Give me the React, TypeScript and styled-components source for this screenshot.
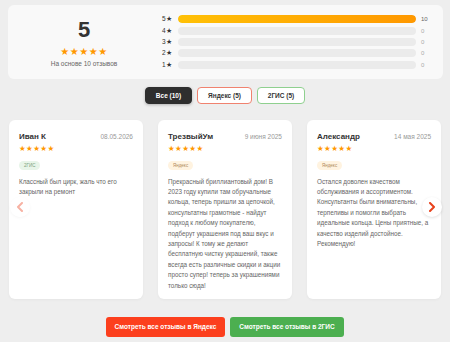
import React from "react";
import styled, { createGlobalStyle } from "styled-components";

const GlobalStyle = createGlobalStyle`
  html, body {
    margin: 0;
    padding: 0;
    background: #eeeeee;
    font-family: "Liberation Sans", Arial, sans-serif;
  }
`;

interface Review {
  name: string;
  date: string;
  source: "yandex" | "2gis";
  text: string;
}

const reviews: Review[] = [
  {
    name: "Иван К",
    date: "08.05.2026",
    source: "2gis",
    text: "Классный был цирк, жаль что его закрыли на ремонт",
  },
  {
    name: "ТрезвыйУм",
    date: "9 июня 2025",
    source: "yandex",
    text:
      "Прекрасный бриллиантовый дом! В 2023 году купили там обручальные кольца, теперь пришли за цепочкой, консультатны грамотные - найдут подход к любому покупателю, подберут украшения под ваш вкус и запросы! К тому же делают бесплатную чистку украшений, также всегда есть различные скидки и акции просто супер! теперь за украшениями только сюда!",
  },
  {
    name: "Александр",
    date: "14 мая 2025",
    source: "yandex",
    text:
      "Остался доволен качеством обслуживания и ассортиментом. Консультанты были внимательны, терпеливы и помогли выбрать идеальные кольца. Цены приятные, а качество изделий достойное. Рекомендую!",
  },
];

const bars = [
  { label: 5, count: 10 },
  { label: 4, count: 0 },
  { label: 3, count: 0 },
  { label: 2, count: 0 },
  { label: 1, count: 0 },
];

const Page = styled.div`
  width: 450px;
  padding: 5px 0 0;
  box-sizing: border-box;
`;

const Summary = styled.div`
  margin: 0 7px 0 8px;
  height: 74px;
  background: #f9f9f9;
  border-radius: 6px;
  display: flex;
  align-items: center;
`;

const Overall = styled.div`
  width: 152px;
  display: flex;
  flex-direction: column;
  align-items: center;
`;

const Score = styled.div`
  font-size: 22px;
  font-weight: bold;
  color: #333;
  line-height: 22px;
  margin-top: 2px;
`;

const Stars = styled.div<{ $size: number }>`
  color: #ff9800;
  font-family: "DejaVu Sans", sans-serif;
  font-size: ${(p) => p.$size}px;
  line-height: 1;
  letter-spacing: ${(p) => p.$size * 0.05}px;
`;

const BigStars = styled(Stars)`
  margin-top: 6px;
`;

const BasedOn = styled.div`
  font-size: 6.5px;
  color: #666;
  margin-top: 3px;
`;

const Bars = styled.div`
  flex: 1;
  padding-right: 8px;
  display: flex;
  flex-direction: column;
  gap: 3.3px;
`;

const BarRow = styled.div`
  display: flex;
  align-items: center;
  height: 8px;
`;

const BarLabel = styled.span`
  width: 16px;
  font-size: 6.5px;
  color: #333;
  padding-left: 2px;
`;

const Track = styled.div`
  flex: 1;
  height: 8px;
  border-radius: 4px;
  background: #ebebeb;
  overflow: hidden;
`;

const Fill = styled.div`
  height: 100%;
  border-radius: 4px;
  background: linear-gradient(90deg, #ffc107, #ff9800);
`;

const BarCount = styled.span<{ $active: boolean }>`
  width: 14px;
  padding-left: 5px;
  font-size: 6px;
  color: ${(p) => (p.$active ? "#666" : "#aaa")};
`;

const Filters = styled.div`
  display: flex;
  justify-content: center;
  gap: 5px;
  margin-top: 8px;
`;

const FilterButton = styled.button<{ $variant: "all" | "yandex" | "2gis" }>`
  height: 17px;
  padding: 0;
  width: ${(p) => (p.$variant === "all" ? 47 : p.$variant === "yandex" ? 55 : 48)}px;
  border-radius: 4px;
  font-family: inherit;
  font-size: 6.5px;
  font-weight: bold;
  cursor: pointer;
  background: ${(p) => (p.$variant === "all" ? "#2e2e2e" : "#fff")};
  color: ${(p) => (p.$variant === "all" ? "#fff" : "#333")};
  border: 1px solid
    ${(p) =>
      p.$variant === "all" ? "#2e2e2e" : p.$variant === "yandex" ? "#f0826f" : "#8fd08f"};
  box-shadow: ${(p) => (p.$variant === "all" ? "0 1px 3px rgba(0,0,0,0.25)" : "none")};
`;

const Carousel = styled.div`
  position: relative;
  margin-top: 16px;
  padding: 0 9px;
  display: grid;
  grid-template-columns: repeat(3, 1fr);
  gap: 15px;
`;

const Card = styled.div`
  background: #fff;
  border-radius: 6px;
  padding: 10px 10px 8px;
  box-shadow: 0 1px 3px rgba(0, 0, 0, 0.04);
`;

const CardHead = styled.div`
  display: flex;
  justify-content: space-between;
  align-items: center;
  height: 12px;
`;

const Name = styled.span`
  font-size: 8px;
  font-weight: bold;
  color: #333;
`;

const DateText = styled.span`
  font-size: 6.5px;
  color: #999;
`;

const CardStars = styled(Stars)`
  margin-top: 3px;
`;

const Badge = styled.span<{ $source: "yandex" | "2gis" }>`
  display: inline-block;
  margin-top: 4px;
  height: 9px;
  line-height: 9px;
  padding: 0 5px;
  border-radius: 5px;
  font-size: 4.5px;
  background: ${(p) => (p.$source === "yandex" ? "#fff3e0" : "#e8f5e9")};
  color: ${(p) => (p.$source === "yandex" ? "#b08a5a" : "#7aa07c")};
`;

const Text = styled.p`
  margin: 6px 0 0;
  font-size: 6.3px;
  line-height: 10.4px;
  color: #666;
`;

const Arrow = styled.button<{ $side: "left" | "right" }>`
  position: absolute;
  top: 77px;
  ${(p) => (p.$side === "left" ? "left: 10px;" : "right: 8px;")}
  width: 20px;
  height: 20px;
  border-radius: 50%;
  border: none;
  padding: 0;
  background: ${(p) => (p.$side === "left" ? "rgba(255,255,255,0.6)" : "#fff")};
  box-shadow: 0 1px 3px rgba(0, 0, 0, ${(p) => (p.$side === "left" ? 0.04 : 0.12)});
  display: flex;
  align-items: center;
  justify-content: center;
  cursor: pointer;
`;

const Actions = styled.div`
  display: flex;
  justify-content: center;
  gap: 5px;
  margin-top: 18px;
`;

const ActionButton = styled.button<{ $color: string; $w: number }>`
  width: ${(p) => p.$w}px;
  height: 20px;
  border: none;
  border-radius: 3px;
  background: ${(p) => p.$color};
  color: #fff;
  font-family: inherit;
  font-size: 6.5px;
  font-weight: bold;
  cursor: pointer;
`;

const Chevron = ({ dir, color }: { dir: "left" | "right"; color: string }) => (
  <svg width="8" height="10" viewBox="0 0 8 10">
    <path
      d={dir === "left" ? "M6 1 L2 5 L6 9" : "M2 1 L6 5 L2 9"}
      fill="none"
      stroke={color}
      strokeWidth="2"
      strokeLinecap="round"
      strokeLinejoin="round"
    />
  </svg>
);

export default function App() {
  return (
    <Page>
      <GlobalStyle />
      <Summary>
        <Overall>
          <Score>5</Score>
          <BigStars $size={10}>★★★★★</BigStars>
          <BasedOn>На основе 10 отзывов</BasedOn>
        </Overall>
        <Bars>
          {bars.map((b) => (
            <BarRow key={b.label}>
              <BarLabel>{b.label}★</BarLabel>
              <Track>
                <Fill style={{ width: `${(b.count / 10) * 100}%` }} />
              </Track>
              <BarCount $active={b.count > 0}>{b.count}</BarCount>
            </BarRow>
          ))}
        </Bars>
      </Summary>

      <Filters>
        <FilterButton $variant="all">Все (10)</FilterButton>
        <FilterButton $variant="yandex">Яндекс (5)</FilterButton>
        <FilterButton $variant="2gis">2ГИС (5)</FilterButton>
      </Filters>

      <Carousel>
        {reviews.map((r) => (
          <Card key={r.name}>
            <CardHead>
              <Name>{r.name}</Name>
              <DateText>{r.date}</DateText>
            </CardHead>
            <CardStars $size={7.5}>★★★★★</CardStars>
            <Badge $source={r.source}>{r.source === "yandex" ? "Яндекс" : "2ГИС"}</Badge>
            <Text>{r.text}</Text>
          </Card>
        ))}
        <Arrow $side="left">
          <Chevron dir="left" color="#f7b2a3" />
        </Arrow>
        <Arrow $side="right">
          <Chevron dir="right" color="#e8421c" />
        </Arrow>
      </Carousel>

      <Actions>
        <ActionButton $color="#fc3f1d" $w={119}>
          Смотреть все отзывы в Яндекс
        </ActionButton>
        <ActionButton $color="#4caf50" $w={114}>
          Смотреть все отзывы в 2ГИС
        </ActionButton>
      </Actions>
    </Page>
  );
}
